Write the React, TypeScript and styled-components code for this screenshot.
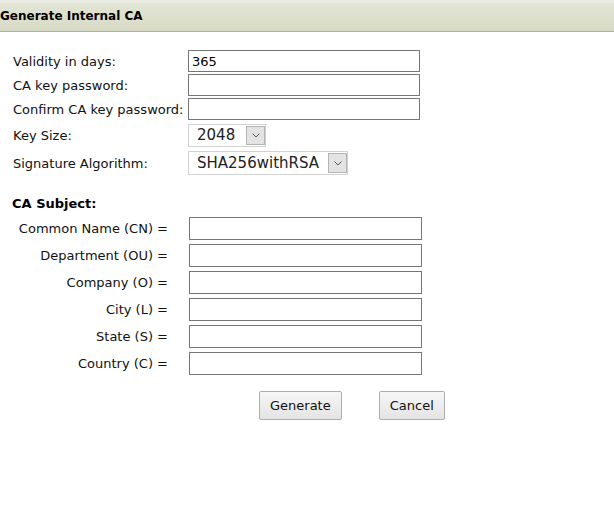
import React, { useState } from "react";
import styled, { createGlobalStyle } from "styled-components";

const GlobalStyle = createGlobalStyle`
  html, body {
    margin: 0;
    padding: 0;
    background: #ffffff;
  }
  body {
    font-family: "DejaVu Sans", Verdana, sans-serif;
    font-size: 13px;
    color: #111;
  }
`;

const Page = styled.div`
  width: 614px;
  height: 513px;
  background: #fff;
`;

const Header = styled.div`
  height: 31px;
  display: flex;
  align-items: center;
  border-bottom: 1px solid #a8b689;
  background: linear-gradient(to bottom, #ebebe6 0px, #ebebe6 2px, #e3e5d5 3px, #d7dac5 100%);
`;

const Title = styled.h1`
  margin: 0;
  font-size: 12px;
  font-weight: bold;
  color: #000;
  padding-top: 1px;
`;

const FormGrid = styled.div`
  margin: 17px 0 0 13px;
  display: grid;
  grid-template-columns: 175px 232px;
  grid-template-rows: 24px 24px 24px 28px 28px;
  align-items: center;
`;

const Label = styled.label`
  font-size: 13px;
  white-space: nowrap;
  color: #111;
`;

const TextInput = styled.input`
  box-sizing: border-box;
  height: 22px;
  width: ${(p: { $width: number }) => p.$width}px;
  border: 1px solid #767676;
  padding: 1px 3px;
  font-family: "DejaVu Sans", Verdana, sans-serif;
  font-size: 13px;
  color: #000;
  background: #fff;
  outline: none;
`;

const SelectBox = styled.div<{ $width: number; $height: number }>`
  box-sizing: border-box;
  width: ${(p) => p.$width}px;
  height: ${(p) => p.$height}px;
  border: 1px solid #d2d2d2;
  display: flex;
  align-items: stretch;
  padding: 1px 0 1px 0;
  background: #fff;
`;

const SelectValue = styled.div`
  flex: 1;
  display: flex;
  align-items: center;
  padding-left: 8px;
  font-size: 15px;
  color: #222;
`;

const ArrowBox = styled.div`
  box-sizing: border-box;
  width: 19px;
  background: #e3e3e3;
  border: 1px solid #b4b4b4;
  display: flex;
  align-items: center;
  justify-content: center;
`;

const SubjectTitle = styled.div`
  margin: 19px 0 0 12px;
  font-size: 13px;
  font-weight: bold;
  line-height: 16px;
  color: #000;
`;

const SubjectGrid = styled.div`
  margin: 3px 0 0 13px;
  display: grid;
  grid-template-columns: 155px 233px;
  column-gap: 21px;
  grid-auto-rows: 27px;
  align-items: center;
`;

const SubjectLabel = styled.label`
  text-align: right;
  font-size: 13px;
  white-space: nowrap;
  color: #111;
`;

const SubjectInput = styled(TextInput)`
  height: 23px;
`;

const Buttons = styled.div`
  margin: 14px 0 0 259px;
  display: flex;
  gap: 37px;
`;

const Button = styled.button`
  box-sizing: border-box;
  height: 29px;
  padding: 0 10px;
  font-family: "DejaVu Sans", Verdana, sans-serif;
  font-size: 13px;
  color: #111;
  border: 1px solid #adadad;
  border-radius: 2px;
  background: linear-gradient(to bottom, #f6f6f6, #e4e4e4);
  cursor: pointer;
`;

const Chevron = () => (
  <svg width="8" height="5" viewBox="0 0 8 5">
    <path d="M0.5 0.5 L4 4 L7.5 0.5" fill="none" stroke="#555" strokeWidth="1" />
  </svg>
);

interface ISelectProps {
  value: string;
  width: number;
  height: number;
}

const FakeSelect = ({ value, width, height }: ISelectProps) => (
  <SelectBox $width={width} $height={height}>
    <SelectValue>{value}</SelectValue>
    <ArrowBox>
      <Chevron />
    </ArrowBox>
  </SelectBox>
);

const subjectFields = [
  "Common Name (CN) =",
  "Department (OU) =",
  "Company (O) =",
  "City (L) =",
  "State (S) =",
  "Country (C) =",
];

const App = () => {
  const [validity, setValidity] = useState<string>("365");

  return (
    <Page>
      <GlobalStyle />
      <Header>
        <Title>Generate Internal CA</Title>
      </Header>

      <FormGrid>
        <Label>Validity in days:</Label>
        <TextInput $width={232} value={validity} onChange={(e) => setValidity(e.target.value)} />
        <Label>CA key password:</Label>
        <TextInput $width={232} type="password" />
        <Label>Confirm CA key password:</Label>
        <TextInput $width={232} type="password" />
        <Label>Key Size:</Label>
        <FakeSelect value="2048" width={78} height={23} />
        <Label>Signature Algorithm:</Label>
        <FakeSelect value="SHA256withRSA" width={160} height={24} />
      </FormGrid>

      <SubjectTitle>CA Subject:</SubjectTitle>
      <SubjectGrid>
        {subjectFields.map((f) => (
          <React.Fragment key={f}>
            <SubjectLabel>{f}</SubjectLabel>
            <SubjectInput $width={233} />
          </React.Fragment>
        ))}
      </SubjectGrid>

      <Buttons>
        <Button>Generate</Button>
        <Button>Cancel</Button>
      </Buttons>
    </Page>
  );
};

export default App;
